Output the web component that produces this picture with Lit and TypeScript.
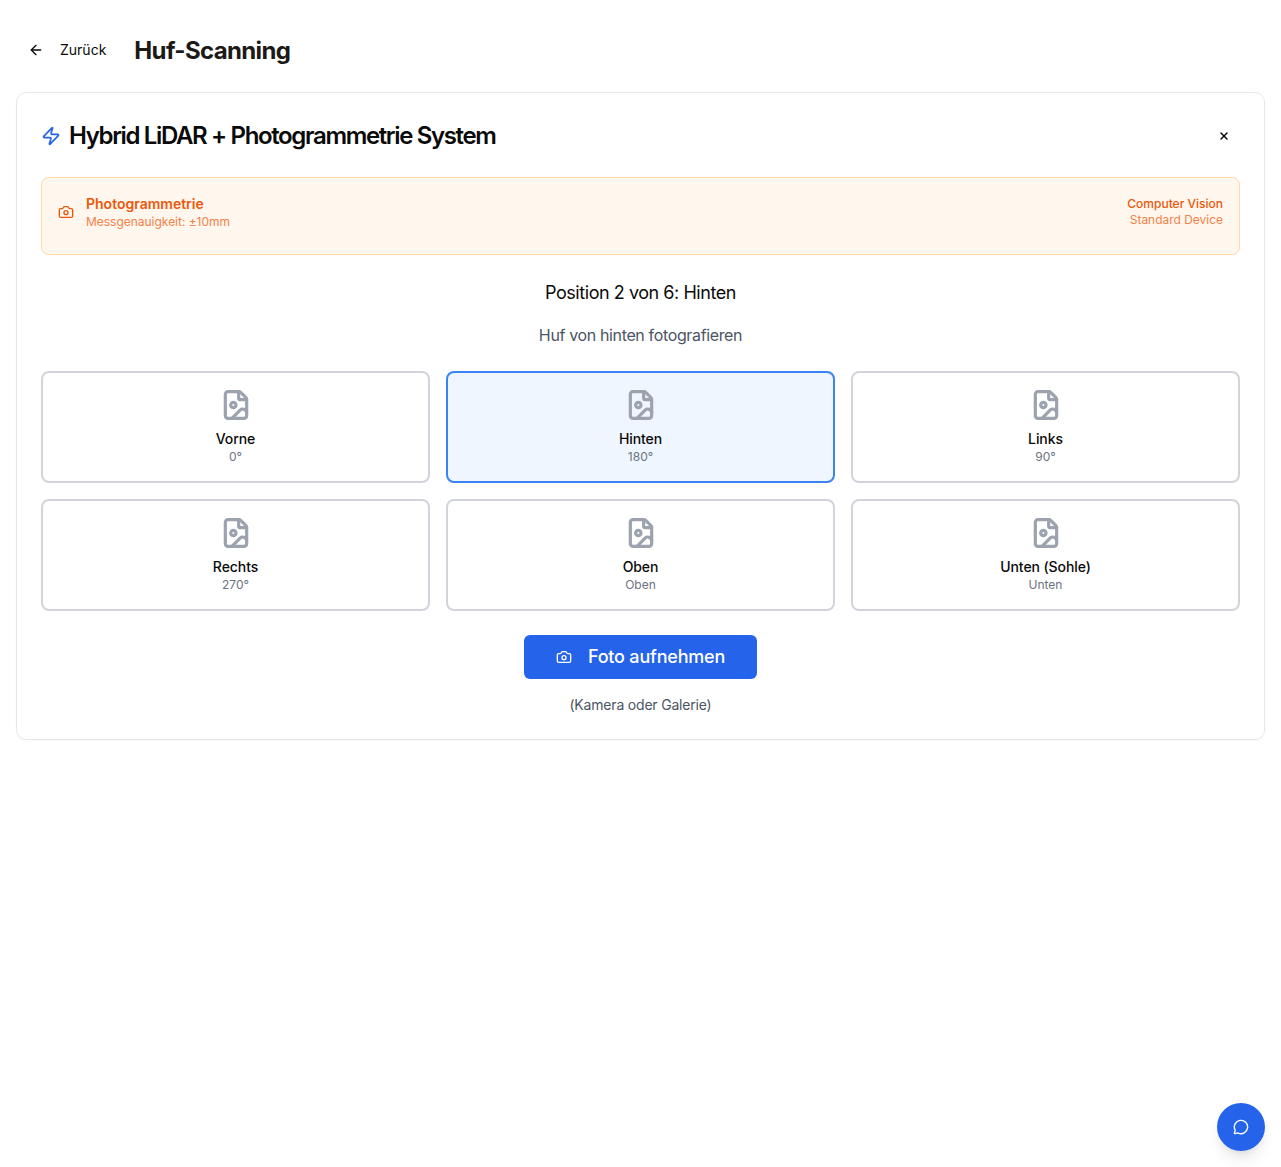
import { LitElement, html, css, svg } from "lit";
import { customElement } from "lit/decorators.js";

const icon = (size: number, body: unknown, sw = 2) => html`<svg class="ic" width=${size} height=${size} viewBox="0 0 24 24" fill="none" stroke="currentColor" stroke-width=${sw} stroke-linecap="round" stroke-linejoin="round">${body}</svg>`;
const arrow = svg`<path d="m12 19-7-7 7-7"/><path d="M19 12H5"/>`;
const zap = svg`<path d="M4 14a1 1 0 0 1-.78-1.63l9.9-10.2a.5.5 0 0 1 .86.46l-1.92 6.02A1 1 0 0 0 13 10h7a1 1 0 0 1 .78 1.63l-9.9 10.2a.5.5 0 0 1-.86-.46l1.92-6.02A1 1 0 0 0 11 14z"/>`;
const x = svg`<path d="M18 6 6 18"/><path d="m6 6 12 12"/>`;
const camera = svg`<path d="M13.997 4a2 2 0 0 1 1.76 1.05l.486.9A2 2 0 0 0 18.003 7H20a2 2 0 0 1 2 2v9a2 2 0 0 1-2 2H4a2 2 0 0 1-2-2V9a2 2 0 0 1 2-2h1.997a2 2 0 0 0 1.759-1.048l.489-.904A2 2 0 0 1 10.004 4z"/><circle cx="12" cy="13" r="3"/>`;
const file = svg`<path d="M6 22a2 2 0 0 1-2-2V4a2 2 0 0 1 2-2h8a2.4 2.4 0 0 1 1.704.706l3.588 3.588A2.4 2.4 0 0 1 20 8v12a2 2 0 0 1-2 2z"/><path d="M14 2v5a1 1 0 0 0 1 1h5"/><circle cx="10" cy="12" r="2"/><path d="m20 17-1.296-1.296a2.41 2.41 0 0 0-3.408 0L9 22"/>`;
const chat = svg`<path d="M2.992 16.342a2 2 0 0 1 .094 1.167l-1.065 3.29a1 1 0 0 0 1.236 1.168l3.413-.998a2 2 0 0 1 1.099.092 10 10 0 1 0-4.777-4.719"/>`;

const tiles = [
  ["Vorne", "0°"], ["Hinten", "180°"], ["Links", "90°"],
  ["Rechts", "270°"], ["Oben", "Oben"], ["Unten (Sohle)", "Unten"],
];

@customElement("app-root")
export class AppRoot extends LitElement {
  static styles = css`
    :host { display: block; min-height: 1167px; background: #fff; color: #0a0a0a; font-family: Inter, "Liberation Sans", sans-serif; position: relative; box-sizing: border-box; padding: 24px 16px 0; }
    * { box-sizing: border-box; }
    .ic { display: block; flex: none; }
    .top { display: flex; align-items: center; gap: 16px; height: 52px; margin-bottom: 16px; }
    .back { display: flex; align-items: center; gap: 16px; height: 36px; padding: 0 12px; font-size: 14px; line-height: 20px; font-weight: 400; color: #0a0a0a; }
    h1 { margin: 0; padding-top: 2px; font-size: 24px; line-height: 32px; font-weight: 700; letter-spacing: -0.65px; color: #1c1917; }
    .card { border: 1px solid #e5e7eb; border-radius: 10px; padding: 24px; height: 648px; box-shadow: 0 1px 2px rgba(0,0,0,.03); }
    .head { display: flex; align-items: center; justify-content: space-between; height: 38px; margin-bottom: 22px; }
    .title { display: flex; align-items: center; gap: 8px; font-size: 24px; line-height: 32px; font-weight: 600; letter-spacing: -1.36px; }
    .zap { color: #2563eb; }
    .close { width: 32px; height: 32px; display: flex; align-items: center; justify-content: center; }
    .alert { height: 78px; display: flex; align-items: flex-start; justify-content: space-between; padding: 16px; background: #fff7ed; border: 1px solid #fed7aa; border-radius: 8px; color: #ea580c; }
    .al { display: flex; align-items: center; gap: 12px; }
    .a1 { font-size: 14px; line-height: 20px; font-weight: 600; }
    .a2 { font-size: 12px; line-height: 16px; color: #f3814a; letter-spacing: -0.02px; }
    .ar { text-align: right; padding-top: 2px; }
    .ar .a1 { font-size: 12px; line-height: 16px; font-weight: 500; }
    .pos { margin-top: 24px; text-align: center; font-size: 18px; line-height: 28px; font-weight: 400; letter-spacing: -0.45px; }
    .hint { margin-top: 16px; text-align: center; font-size: 16px; line-height: 24px; letter-spacing: -0.36px; color: #4b5563; }
    .grid { margin-top: 24px; display: grid; grid-template-columns: repeat(3, 1fr); gap: 16px; }
    .tile { height: 112px; border: 2px solid #d1d5db; border-radius: 8px; padding: 16px; display: flex; flex-direction: column; align-items: center; text-align: center; }
    .tile.on { border-color: #3b82f6; background: #eff6ff; }
    .tile .ic { color: #9ca3af; margin-bottom: 8px; }
    .name { font-size: 14px; line-height: 20px; font-weight: 500; letter-spacing: -0.08px; }
    .deg { font-size: 12px; line-height: 16px; color: #6b7280; }
    .actions { margin-top: 24px; display: flex; flex-direction: column; align-items: center; }
    .btn { width: 233px; height: 44px; display: flex; align-items: center; justify-content: center; gap: 16px; background: #2563eb; border-radius: 6px; color: #fff; font-size: 18px; font-weight: 500; letter-spacing: -0.2px; }
    .btn span { padding-bottom: 2px; }
    .cap { margin-top: 16px; font-size: 14px; line-height: 20px; letter-spacing: -0.19px; color: #4b5563; }
    .fab { position: absolute; left: 1217px; top: 1103px; width: 48px; height: 48px; border-radius: 50%; background: #2563eb; color: #fff; display: flex; align-items: center; justify-content: center; box-shadow: 0 10px 15px -3px rgba(0,0,0,.1), 0 4px 6px -4px rgba(0,0,0,.1); }
  `;

  render() {
    return html`
      <div class="top">
        <div class="back">${icon(16, arrow)}<span>Zurück</span></div>
        <h1>Huf-Scanning</h1>
      </div>
      <div class="card">
        <div class="head">
          <div class="title"><span class="zap">${icon(20, zap)}</span><span>Hybrid LiDAR + Photogrammetrie System</span></div>
          <div class="close">${icon(12, x, 3)}</div>
        </div>
        <div class="alert">
          <div class="al">
            ${icon(16, camera)}
            <div><div class="a1">Photogrammetrie</div><div class="a2">Messgenauigkeit: ±10mm</div></div>
          </div>
          <div class="ar"><div class="a1">Computer Vision</div><div class="a2">Standard Device</div></div>
        </div>
        <div class="pos">Position 2 von 6: Hinten</div>
        <div class="hint">Huf von hinten fotografieren</div>
        <div class="grid">
          ${tiles.map(([n, d], i) => html`<div class="tile ${i === 1 ? "on" : ""}">${icon(32, file, 2.4)}<div class="name">${n}</div><div class="deg">${d}</div></div>`)}
        </div>
        <div class="actions">
          <div class="btn">${icon(16, camera)}<span>Foto aufnehmen</span></div>
          <div class="cap">(Kamera oder Galerie)</div>
        </div>
      </div>
      <div class="fab">${icon(16, chat)}</div>
    `;
  }
}
